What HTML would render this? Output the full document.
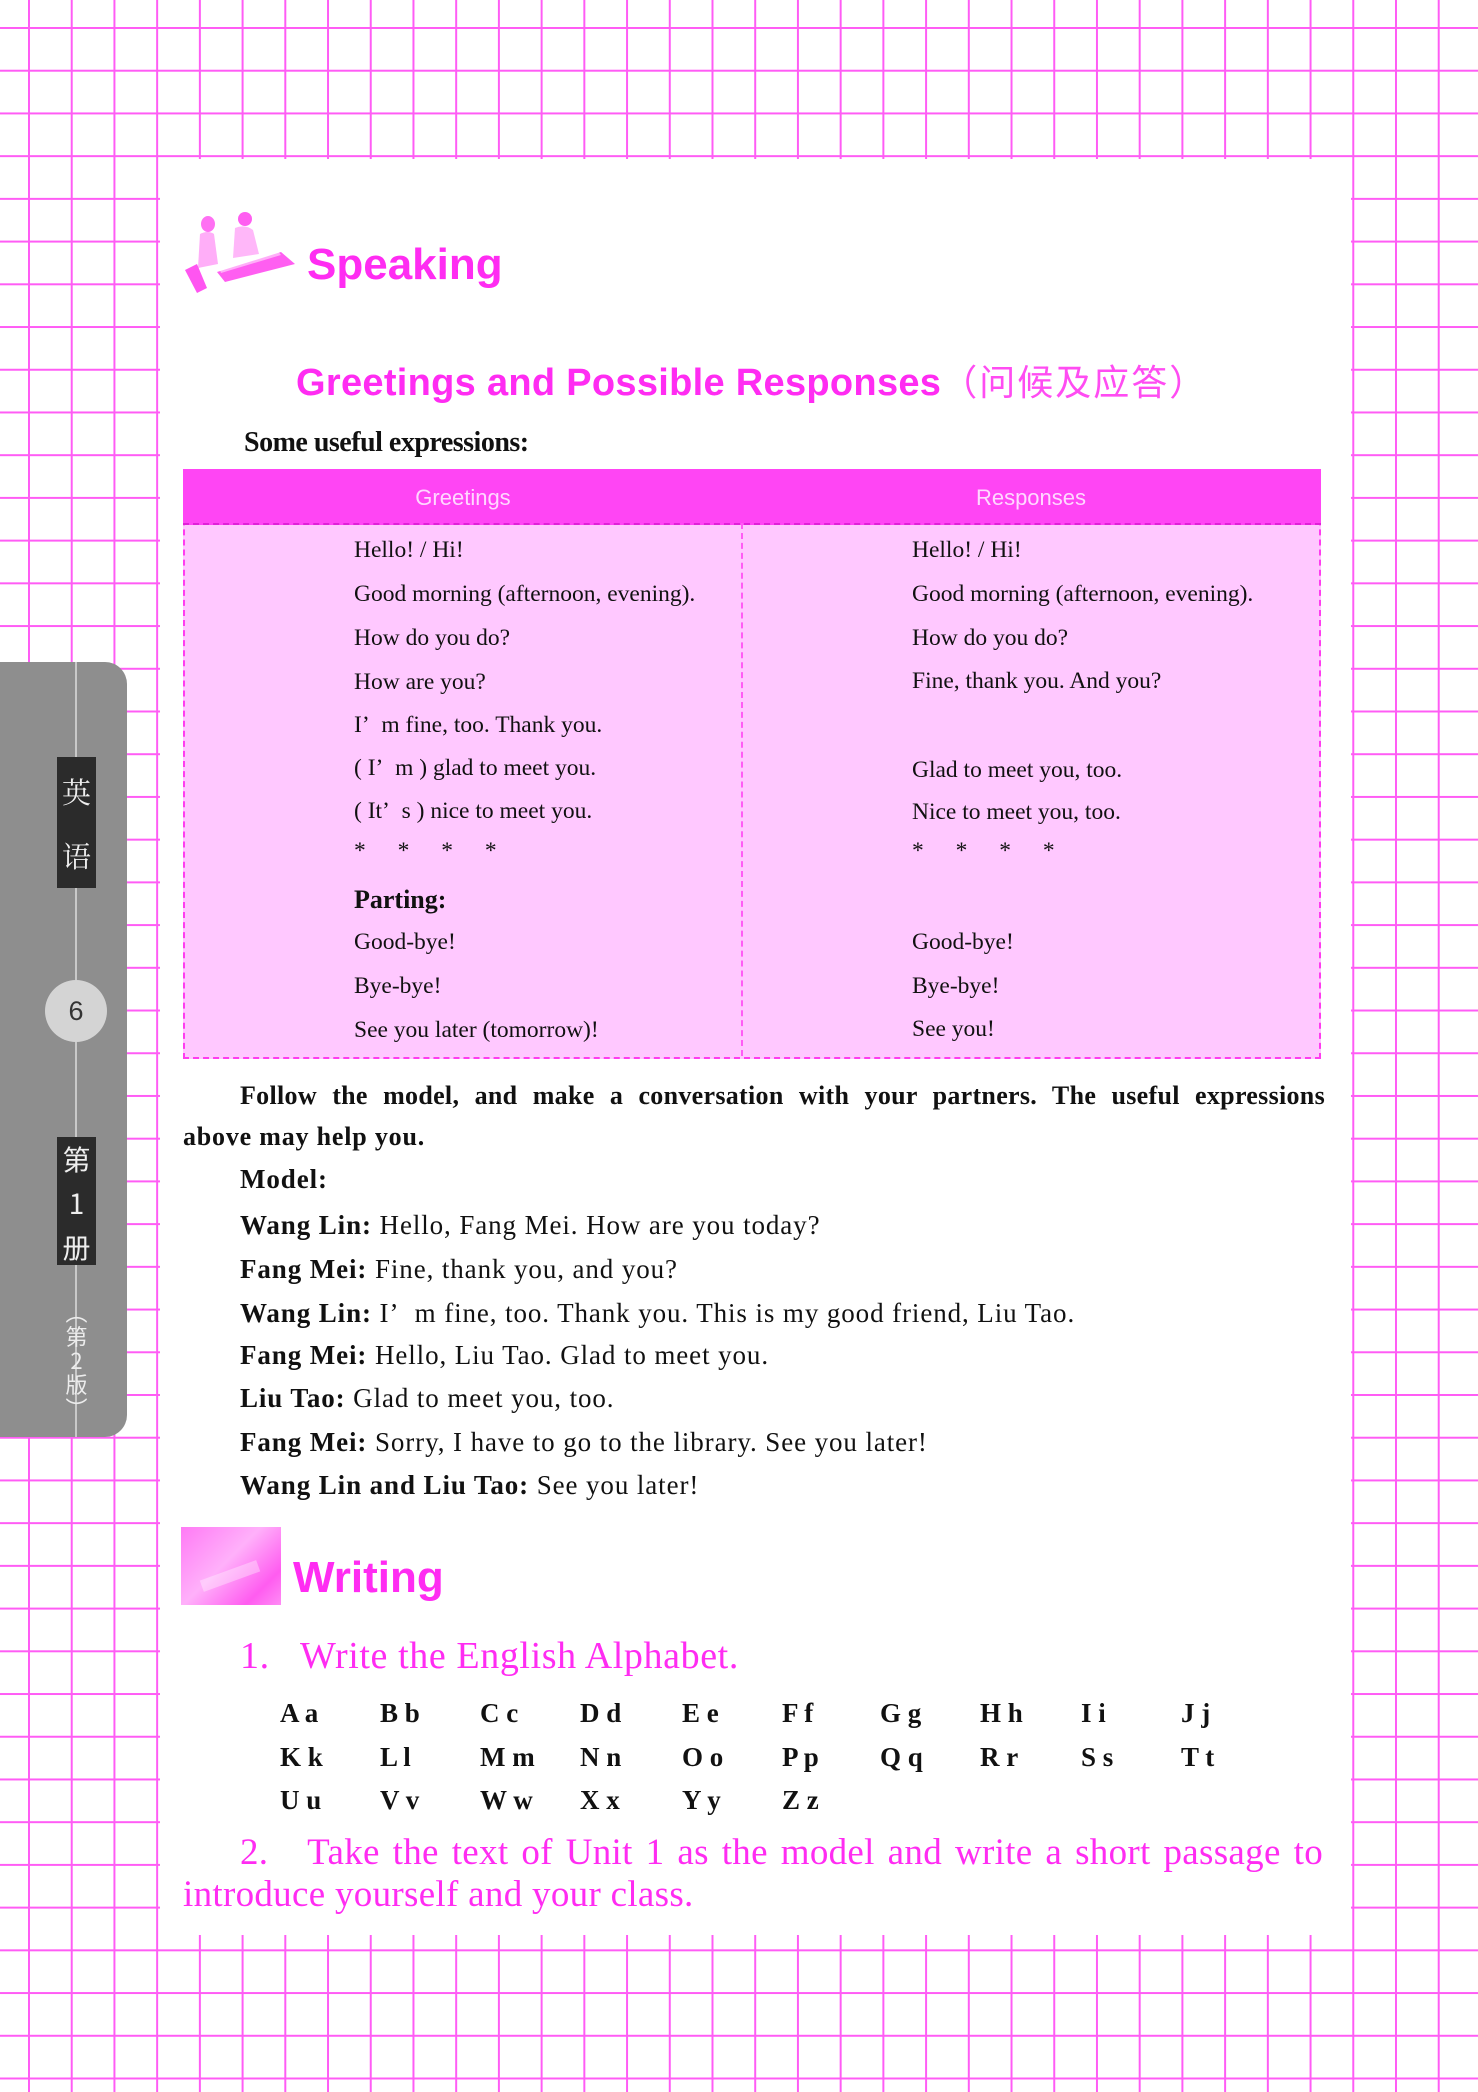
<!DOCTYPE html>
<html><head><meta charset="utf-8">
<style>
html,body{margin:0;padding:0}
body{width:1478px;height:2092px;position:relative;overflow:hidden;background:#fff;
background-image:linear-gradient(to right,#ff5cf5 2px,transparent 2px),linear-gradient(to bottom,#ff5cf5 2px,transparent 2px);
background-size:42.72px 42.72px;background-position:28px 27px;}
.a{position:absolute;white-space:nowrap}
.ser{font-family:"Liberation Serif",serif;color:#111}
.san{font-family:"Liberation Sans",sans-serif}
.mag{color:#ff2cf2}
.row{font-size:23.5px;line-height:44px;height:44px}
.dl{font-size:27px;line-height:44px;left:240px;letter-spacing:0.9px}
.al{font-family:"Liberation Serif",serif;font-weight:bold;font-size:27px;line-height:44px;color:#111}
</style></head><body>
<div class="a" style="left:160px;top:159px;width:1191px;height:1776px;background:#fff"></div>

<div class="a" style="left:0;top:662px;width:127px;height:775px;background:#8e8e8e;border-radius:0 22px 22px 0"></div>
<div class="a" style="left:75px;top:662px;width:2px;height:775px;background:#c9c9c9"></div>
<div class="a" style="left:57px;top:757px;width:39px;height:131px;background:#2b2b2b"></div>
<div class="a" style="left:57px;top:760px;width:39px;font-family:'Noto Serif CJK SC','Noto Sans CJK SC',serif;font-size:29px;color:#eee;text-align:center;line-height:64px">英<br>语</div>
<div class="a" style="left:45px;top:980px;width:62px;height:62px;border-radius:50%;background:#d4d4d4"></div>
<div class="a san" style="left:45px;top:980px;width:62px;line-height:62px;text-align:center;font-size:27px;color:#333">6</div>
<div class="a" style="left:57px;top:1137px;width:39px;height:128px;background:#2b2b2b"></div>
<div class="a" style="left:57px;top:1137px;width:39px;font-family:'Noto Sans CJK SC',sans-serif;font-size:28px;color:#eee;text-align:center;line-height:44px">第<br>1<br>册</div>
<div class="a" style="left:57px;top:1300px;width:39px;font-family:'Noto Sans CJK SC',sans-serif;font-size:22px;color:#ececec;text-align:center;line-height:24px">︵<br>第<br>2<br>版<br>︶</div>

<svg class="a" style="left:183px;top:212px" width="115" height="82" viewBox="0 0 115 82">
<g fill="#ff4cf0">
<ellipse cx="25" cy="12" rx="7" ry="8" opacity=".8"/>
<path d="M17 22 q8 -4 14 0 l4 30 l-20 4 z" opacity=".45"/>
<ellipse cx="62" cy="7" rx="7" ry="7" opacity=".9"/>
<path d="M52 16 q10 -4 18 2 l6 24 l-26 4 z" opacity=".4"/>
<path d="M2 58 l12 -6 l10 24 l-10 5 z" opacity=".95"/>
<path d="M34 60 l64 -20 l14 12 l-70 18 z" opacity=".9"/>
<path d="M36 56 l58 -18 l4 5 l-60 18 z" fill="#fff" opacity=".5"/>
</g></svg>
<div class="a san" style="left:307px;top:243px;font-size:44px;line-height:44px;font-weight:bold;color:#ff2cf2">Speaking</div>

<div class="a san mag" style="left:296px;top:360px;font-size:38px;line-height:40px;font-weight:bold;letter-spacing:0.3px">Greetings and Possible Responses<span style="font-family:'Noto Sans CJK SC',sans-serif;font-weight:normal;color:#ff4cf2;font-size:36px;letter-spacing:2px">（问候及应答）</span></div>

<div class="a ser" style="left:244px;top:425px;font-size:28px;line-height:36px;font-weight:bold;letter-spacing:-0.5px">Some useful expressions:</div>

<div class="a" style="left:183px;top:469px;width:1134px;height:586px;background:#ffc8ff;border:2px dashed #ff3cf0"></div>
<div class="a" style="left:183px;top:469px;width:1138px;height:54px;background:#ff45f4;border-bottom:2px dashed #e020d8"></div>
<div class="a" style="left:741px;top:523px;width:2px;height:533px;border-left:2px dashed #ff5cf5"></div>
<div class="a san" style="left:183px;top:481px;width:560px;text-align:center;font-size:22px;line-height:34px;color:#ffd8ff">Greetings</div>
<div class="a san" style="left:743px;top:481px;width:576px;text-align:center;font-size:22px;line-height:34px;color:#ffd8ff">Responses</div>

<div class="a ser row" style="left:354px;top:528px">Hello! / Hi!</div>
<div class="a ser row" style="left:354px;top:572px">Good morning (afternoon, evening).</div>
<div class="a ser row" style="left:354px;top:616px">How do you do?</div>
<div class="a ser row" style="left:354px;top:660px">How are you?</div>
<div class="a ser row" style="left:354px;top:703px">I’&nbsp;&nbsp;m fine, too. Thank you.</div>
<div class="a ser row" style="left:354px;top:746px">( I’&nbsp;&nbsp;m ) glad to meet you.</div>
<div class="a ser row" style="left:354px;top:789px">( It’&nbsp;&nbsp;s ) nice to meet you.</div>
<div class="a ser row" style="left:354px;top:829px;word-spacing:26px">* * * *</div>
<div class="a ser" style="left:354px;top:878px;font-size:26px;line-height:44px;font-weight:bold">Parting:</div>
<div class="a ser row" style="left:354px;top:920px">Good-bye!</div>
<div class="a ser row" style="left:354px;top:964px">Bye-bye!</div>
<div class="a ser row" style="left:354px;top:1008px">See you later (tomorrow)!</div>

<div class="a ser row" style="left:912px;top:528px">Hello! / Hi!</div>
<div class="a ser row" style="left:912px;top:572px">Good morning (afternoon, evening).</div>
<div class="a ser row" style="left:912px;top:616px">How do you do?</div>
<div class="a ser row" style="left:912px;top:659px">Fine, thank you. And you?</div>
<div class="a ser row" style="left:912px;top:748px">Glad to meet you, too.</div>
<div class="a ser row" style="left:912px;top:790px">Nice to meet you, too.</div>
<div class="a ser row" style="left:912px;top:829px;word-spacing:26px">* * * *</div>
<div class="a ser row" style="left:912px;top:920px">Good-bye!</div>
<div class="a ser row" style="left:912px;top:964px">Bye-bye!</div>
<div class="a ser row" style="left:912px;top:1007px">See you!</div>

<div class="a ser" style="left:240px;top:1075px;width:1085px;white-space:normal;text-align:justify;text-align-last:justify;font-size:26px;line-height:41px;font-weight:bold;letter-spacing:0.3px">Follow the model, and make a conversation with your partners. The useful expressions</div>
<div class="a ser" style="left:183px;top:1116px;font-size:26px;line-height:41px;font-weight:bold;letter-spacing:0.8px">above may help you.</div>

<div class="a ser dl" style="top:1157px;font-weight:bold">Model:</div>
<div class="a ser dl" style="top:1203px"><b>Wang Lin:</b> Hello, Fang Mei. How are you today?</div>
<div class="a ser dl" style="top:1247px"><b>Fang Mei:</b> Fine, thank you, and you?</div>
<div class="a ser dl" style="top:1291px"><b>Wang Lin:</b> I’&nbsp;&nbsp;m fine, too. Thank you. This is my good friend, Liu Tao.</div>
<div class="a ser dl" style="top:1333px"><b>Fang Mei:</b> Hello, Liu Tao. Glad to meet you.</div>
<div class="a ser dl" style="top:1376px"><b>Liu Tao:</b> Glad to meet you, too.</div>
<div class="a ser dl" style="top:1420px"><b>Fang Mei:</b> Sorry, I have to go to the library. See you later!</div>
<div class="a ser dl" style="top:1463px"><b>Wang Lin and Liu Tao:</b> See you later!</div>

<div class="a" style="left:181px;top:1527px;width:100px;height:78px;background:linear-gradient(135deg,#ff7af5,#ffb0fa 45%,#ff5cf0 80%,#ff8cf5)"></div>
<div class="a" style="left:200px;top:1570px;width:60px;height:12px;background:#fff;opacity:.35;transform:rotate(-20deg)"></div>
<div class="a san" style="left:293px;top:1556px;font-size:44px;line-height:44px;font-weight:bold;color:#ff2cf2">Writing</div>

<div class="a ser mag" style="left:240px;top:1634px;font-size:38px;line-height:44px;letter-spacing:0.6px">1.&nbsp;&nbsp;&nbsp;Write the English Alphabet.</div>

<div class="a al" style="left:280px;top:1691px">A a</div>
<div class="a al" style="left:380px;top:1691px">B b</div>
<div class="a al" style="left:480px;top:1691px">C c</div>
<div class="a al" style="left:580px;top:1691px">D d</div>
<div class="a al" style="left:682px;top:1691px">E e</div>
<div class="a al" style="left:782px;top:1691px">F f</div>
<div class="a al" style="left:880px;top:1691px">G g</div>
<div class="a al" style="left:980px;top:1691px">H h</div>
<div class="a al" style="left:1081px;top:1691px">I i</div>
<div class="a al" style="left:1181px;top:1691px">J j</div>
<div class="a al" style="left:280px;top:1735px">K k</div>
<div class="a al" style="left:380px;top:1735px">L l</div>
<div class="a al" style="left:480px;top:1735px">M m</div>
<div class="a al" style="left:580px;top:1735px">N n</div>
<div class="a al" style="left:682px;top:1735px">O o</div>
<div class="a al" style="left:782px;top:1735px">P p</div>
<div class="a al" style="left:880px;top:1735px">Q q</div>
<div class="a al" style="left:980px;top:1735px">R r</div>
<div class="a al" style="left:1081px;top:1735px">S s</div>
<div class="a al" style="left:1181px;top:1735px">T t</div>
<div class="a al" style="left:280px;top:1778px">U u</div>
<div class="a al" style="left:380px;top:1778px">V v</div>
<div class="a al" style="left:480px;top:1778px">W w</div>
<div class="a al" style="left:580px;top:1778px">X x</div>
<div class="a al" style="left:682px;top:1778px">Y y</div>
<div class="a al" style="left:782px;top:1778px">Z z</div>

<div class="a ser mag" style="left:183px;top:1832px;width:1140px;white-space:normal;text-align:justify;text-align-last:left;text-indent:57px;font-size:37px;line-height:42px;letter-spacing:0.3px">2.&nbsp;&nbsp;&nbsp;Take the text of Unit 1 as the model and write a short passage to introduce yourself and your class.</div>
</body></html>
